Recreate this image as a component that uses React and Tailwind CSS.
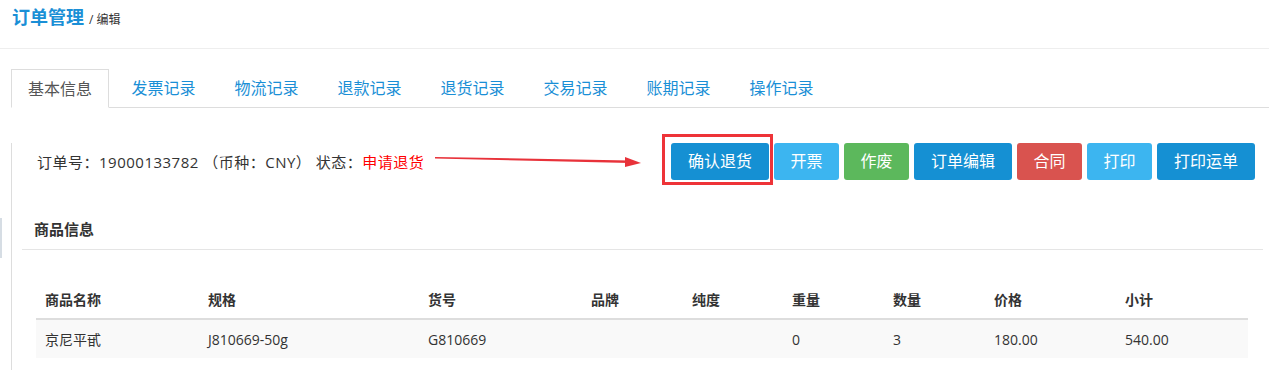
const tabs = ["基本信息", "发票记录", "物流记录", "退款记录", "退货记录", "交易记录", "账期记录", "操作记录"];

const buttons = [
  { label: "开票", cls: "w-[65px] bg-[#3cb5f0]" },
  { label: "作废", cls: "w-[65px] bg-[#5cb85c]" },
  { label: "订单编辑", cls: "w-[98px] bg-[#1590d3]" },
  { label: "合同", cls: "w-[65px] bg-[#d9534f]" },
  { label: "打印", cls: "w-[65px] bg-[#3cb5f0]" },
  { label: "打印运单", cls: "w-[98px] bg-[#1590d3]" },
];

const cols = ["商品名称", "规格", "货号", "品牌", "纯度", "重量", "数量", "价格", "小计"];
const row = ["京尼平甙", "J810669-50g", "G810669", "", "", "0", "3", "180.00", "540.00"];

const font = { fontFamily: '"Open Sans", "Noto Sans CJK SC", sans-serif' };

function Btn({ label, cls }) {
  return (
    <button className={`h-[37px] rounded-[3px] text-white text-[16px] leading-[37px] text-center ${cls}`}>
      {label}
    </button>
  );
}

export default function App() {
  return (
    <div className="w-[1269px] h-[370px] bg-white text-[#333] overflow-hidden" style={font}>
      <div className="h-[49px] border-b border-[#eee] pl-[12px] pt-[5px] flex items-baseline gap-[5px]">
        <span className="text-[18px] font-bold text-[#1a8fd6] leading-[24px]">订单管理</span>
        <span className="text-[12px] text-[#333]">/ 编辑</span>
      </div>

      <div className="flex">
        <div className="w-[11px] shrink-0 pt-[169px]">
          <div className="w-[2px] h-[40px] bg-[#d6dde4]" />
        </div>
        <div className="flex-1">
          <div className="mt-[20px] h-[39px] flex gap-[6px] border-b border-[#ddd]">
            {tabs.map((t, i) => (
              <div
                key={t}
                className={
                  i === 0
                    ? "w-[98px] h-[39px] border border-[#ddd] border-b-white bg-white text-[#555] text-[16px] leading-[38px] text-center"
                    : "w-[97px] h-[38px] text-[#1a8fd6] text-[16px] leading-[38px] text-center"
                }
              >
                {t}
              </div>
            ))}
          </div>

          <div className="border-l border-[#ddd] pb-[20px]">
            <div className="mt-[35px] flex items-center justify-between pl-[25px] pr-[14px]">
              <div className="flex items-center">
                <span className="text-[15px] leading-[20px] tracking-[0.5px]">
                  订单号：19000133782 （币种：CNY） 状态：<span className="text-[#f00]">申请退货</span>
                </span>
                <svg width="210" height="12" viewBox="0 0 210 12" className="ml-[11px]">
                  <polygon points="0,1 195,4.5 195,7 0,2.5" fill="#e8323a" />
                  <polygon points="190,1 206,7 190,11" fill="#e8323a" />
                </svg>
              </div>
              <div className="flex gap-[5px]">
                <div className="relative">
                  <Btn label="确认退货" cls="w-[98px] bg-[#1590d3]" />
                  <div className="absolute left-[-9px] top-[-9px] right-[-4px] bottom-[-5px] border-[3px] border-[#ee3338]" />
                </div>
                {buttons.map((b) => (
                  <Btn key={b.label} {...b} />
                ))}
              </div>
            </div>

            <div className="mt-[32px] ml-[10px] mr-[6px] border-b border-[#e5e5e5] h-[38px] pl-[12px] text-[15px] font-bold leading-[34px]">
              商品信息
            </div>

            <div className="mt-[32px] ml-[24px] mr-[21px] text-[14px]">
              <div className="grid grid-cols-[163px_220px_163px_101px_100px_101px_101px_131px_1fr] h-[38px] items-center border-b-2 border-[#ddd] font-bold">
                {cols.map((c) => (
                  <div key={c} className="pl-[9px] -mt-[1px]">{c}</div>
                ))}
              </div>
              <div className="grid grid-cols-[163px_220px_163px_101px_100px_101px_101px_131px_1fr] h-[38px] items-center bg-[#f9f9f9]">
                {row.map((c, i) => (
                  <div key={i} className="pl-[9px]">{c}</div>
                ))}
              </div>
            </div>
          </div>
        </div>
      </div>
    </div>
  );
}
